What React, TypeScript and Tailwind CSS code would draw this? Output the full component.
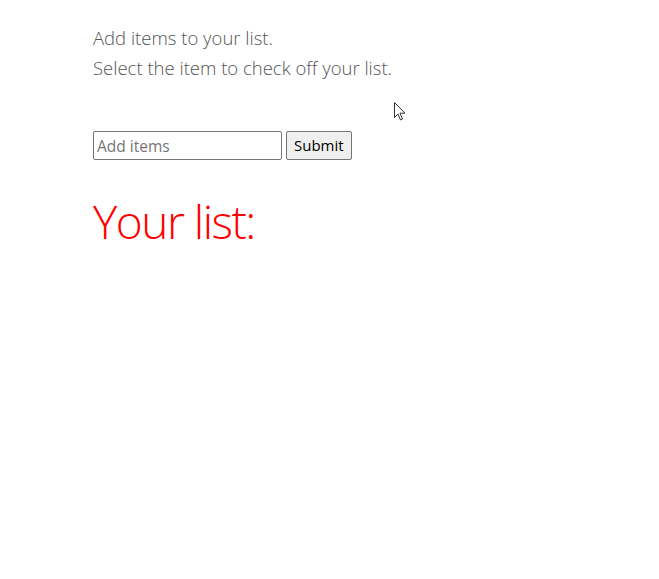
import React from "react";

export default function App() {
  return (
    <div className="relative w-[659px] h-[579px] bg-white" style={{ fontFamily: '"Open Sans", "Noto Sans", sans-serif' }}>
      <div className="pl-[93px] pt-[23px]">
        <p className="text-[18.5px] leading-[30px] font-light text-[#555555]">Add items to your list.</p>
        <p className="text-[18.5px] leading-[30px] font-light text-[#555555]">Select the item to check off your list.</p>
        <form className="mt-[48px] flex items-center gap-[4px]" onSubmit={(e) => e.preventDefault()}>
          <input
            placeholder="Add items"
            className="w-[189px] h-[29px] border border-[#767676] rounded-[2px] px-[3px] text-[15.5px] placeholder:text-[#757575] text-black outline-none"
          />
          <button className="h-[29px] px-[7px] border border-[#767676] rounded-[2px] bg-[#efefef] text-[15px] text-black">Submit</button>
        </form>
        <h1 className="mt-[31px] text-[46px] leading-[60px] font-light tracking-[-1.5px] text-[#ff0000]">Your list:</h1>
      </div>
      <svg className="absolute left-[394px] top-[102px]" width="13" height="20" viewBox="0 0 13 20">
        <path d="M0.5 0.5 L0.5 15.5 L4 12 L6.5 18 L8.5 17 L6 11.2 L11 11.2 Z" fill="white" stroke="#333" strokeWidth="1" strokeLinejoin="round" />
      </svg>
    </div>
  );
}
